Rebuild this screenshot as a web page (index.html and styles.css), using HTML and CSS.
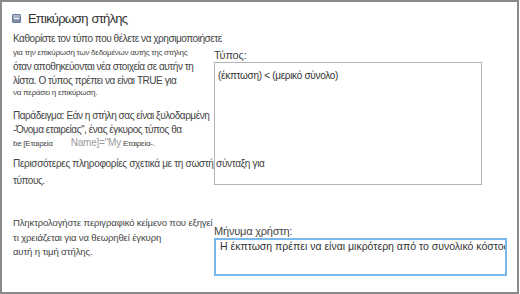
FILE: index.html
```html
<!DOCTYPE html>
<html>
<head>
<meta charset="utf-8">
<link rel="stylesheet" href="styles.css">
</head>
<body>
<div class="frame">
  <div class="header">
    <span class="icon"><span class="minus"></span></span>
    <span class="title">Επικύρωση στήλης</span>
  </div>
  <div class="row row1">
    <div class="desc">
      <div class="ln m h14">Καθορίστε τον τύπο που θέλετε να χρησιμοποιήσετε</div>
      <div class="ln s h13">για την επικύρωση των δεδομένων αυτής της στήλης</div>
      <div class="ln m h15">όταν αποθηκεύονται νέα στοιχεία σε αυτήν τη</div>
      <div class="ln m h14">λίστα. Ο τύπος πρέπει να είναι TRUE για</div>
      <div class="ln s h10">να περάσει η επικύρωση.</div>
      <div class="gap g11"></div>
      <div class="ln m h14">Παράδειγμα: Εάν η στήλη σας είναι ξυλοδαρμένη</div>
      <div class="ln m h14">-Όνομα εταιρείας", ένας έγκυρος τύπος θα</div>
      <div class="ln s h12">be [Εταιρεία<span class="grey">Name]="My</span> Εταιρεία-.</div>
      <div class="gap g8"></div>
      <div class="ln m wide h14">Περισσότερες πληροφορίες σχετικά με τη σωστή σύνταξη για</div>
      <div class="ln m h20">τύπους.</div>
    </div>
    <div class="field field1">
      <div class="label">Τύπος:</div>
      <div class="box formula">(έκπτωση) &lt; (μερικό σύνολο)</div>
    </div>
  </div>
  <div class="row row2">
    <div class="desc">
      <div class="ln s2">Πληκτρολογήστε περιγραφικό κείμενο που εξηγεί</div>
      <div class="ln s2">τι χρειάζεται για να θεωρηθεί έγκυρη</div>
      <div class="ln s2">αυτή η τιμή στήλης.</div>
    </div>
    <div class="field field2">
      <div class="label">Μήνυμα χρήστη:</div>
      <div class="box message">Η έκπτωση πρέπει να είναι μικρότερη από το συνολικό κόστος</div>
    </div>
  </div>
</div>
</body>
</html>
```
FILE: styles.css
```css
html, body {
  margin: 0;
  padding: 0;
}
html {
  background: #ffffff;
}
body {
  font-family: "Liberation Sans", "Noto Sans", sans-serif;
  color: #444444;
}
.frame {
  box-sizing: border-box;
  width: 519px;
  height: 294px;
  border: 2px solid #8a8a8a;
  padding: 0 0 0 11px;
  overflow: hidden;
}
.header {
  display: flex;
  align-items: center;
  gap: 7px;
  height: 28px;
  margin-top: 2px;
}
.icon {
  box-sizing: border-box;
  width: 9px;
  height: 9px;
  border: 1px solid #6c7b95;
  border-radius: 1px;
  background: linear-gradient(#b3bfd2, #7788a6);
  display: flex;
  align-items: center;
  justify-content: center;
  margin-left: -1px;
  margin-top: 1px;
}
.minus {
  width: 5px;
  height: 1px;
  background: #ffffff;
}
.title {
  font-size: 13px;
  letter-spacing: -0.8px;
  word-spacing: 1px;
  color: #333333;
}
.row {
  display: grid;
  grid-template-columns: 201px 1fr;
}
.desc {
  white-space: nowrap;
}
.m {
  font-size: 10px;
  letter-spacing: -0.45px;
}
.wide {
  letter-spacing: -0.32px;
}
.s {
  font-size: 8px;
  letter-spacing: -0.25px;
}
.s2 {
  font-size: 9.5px;
  letter-spacing: -0.12px;
  height: 14.5px;
  line-height: 14.5px;
}
.h10 { height: 10px; line-height: 10px; }
.h12 { height: 12px; line-height: 12px; }
.h13 { height: 13px; line-height: 13px; }
.h14 { height: 14px; line-height: 14px; }
.h15 { height: 15px; line-height: 15px; }
.h20 { height: 20px; line-height: 20px; }
.g11 { height: 11px; }
.g8 { height: 8px; }
.grey {
  color: #9a9a9a;
  font-size: 10px;
  letter-spacing: -0.2px;
  margin-left: 18px;
}
.field1 {
  padding-top: 16px;
}
.label {
  font-size: 11px;
  letter-spacing: -0.2px;
  line-height: 14px;
  color: #444444;
}
.box {
  box-sizing: border-box;
  white-space: nowrap;
  overflow: hidden;
  color: #333333;
  line-height: 13px;
}
.formula {
  width: 268px;
  height: 123px;
  border: 1px solid #b4b4b4;
  padding: 6px 0 0 3px;
  font-size: 10px;
  letter-spacing: -0.3px;
}
.row2 {
  margin-top: 25px;
}
.field2 {
  padding-top: 9px;
}
.field2 .label {
  line-height: 13px;
}
.message {
  width: 293px;
  height: 38px;
  border: 2px solid #78b8ec;
  padding: 0 0 0 4px;
  font-size: 10.5px;
  letter-spacing: 0;
}
```
